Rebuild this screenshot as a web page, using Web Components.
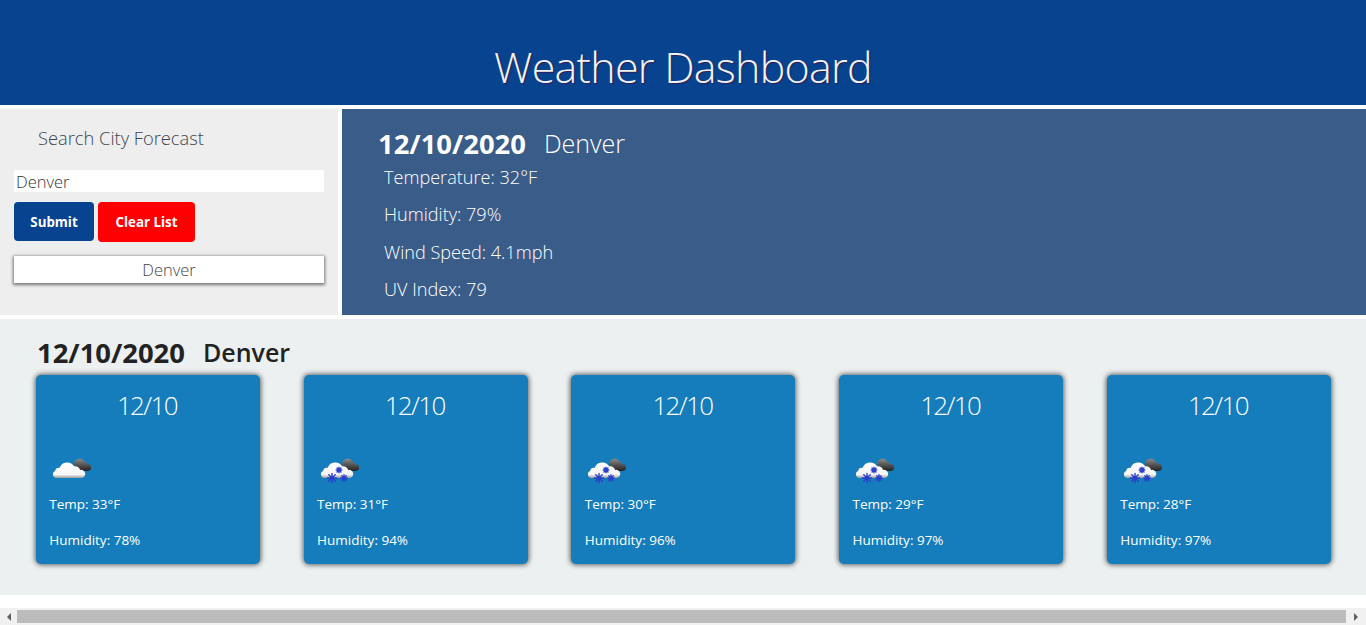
<!DOCTYPE html>
<html lang="en">
<head>
<meta charset="utf-8">
<title>Weather Dashboard</title>
<style>
    html, body { margin: 0; height: 625px; overflow: hidden; background: #fff; }
    body { font-family: "Open Sans", "Noto Sans", sans-serif; font-weight: 300; display: flex; flex-direction: column; }
</style>
</head>
<body>
<weather-header>Weather Dashboard</weather-header>
<div id="top-row" style="display:flex;gap:4px;margin-top:4px;height:206px">
    <search-panel></search-panel>
    <current-weather date="12/10/2020" city="Denver" temp="32" humidity="79" wind="4.1" uv="79"></current-weather>
</div>
<forecast-section date="12/10/2020" city="Denver"></forecast-section>
<fake-scrollbar></fake-scrollbar>

<script>
const forecast = [
    { date: '12/10', temp: 33, humidity: 78, icon: 'cloudy' },
    { date: '12/10', temp: 31, humidity: 94, icon: 'snow' },
    { date: '12/10', temp: 30, humidity: 96, icon: 'snow' },
    { date: '12/10', temp: 29, humidity: 97, icon: 'snow' },
    { date: '12/10', temp: 28, humidity: 97, icon: 'snow' },
];

class WeatherHeader extends HTMLElement {
    constructor() {
        super();
        this.attachShadow({ mode: 'open' });
        this.shadowRoot.innerHTML = `
            <style>
                :host { display: flex; height: 105px; background: #07438f; justify-content: center; align-items: flex-end; box-sizing: border-box; padding-bottom: 9px; }
                h1 { margin: 0; font-size: 43px; letter-spacing: -.75px; line-height: 59px; font-weight: 300; color: #f2f2f2; text-shadow: 1px 1px 1px rgba(60, 20, 70, .8); }
            </style>
            <h1><slot></slot></h1>
        `;
    }
}
customElements.define('weather-header', WeatherHeader);

class SearchPanel extends HTMLElement {
    constructor() {
        super();
        this.attachShadow({ mode: 'open' });
        this.shadowRoot.innerHTML = `
            <style>
                :host { display: block; width: 338px; flex: none; background: #eee; box-sizing: border-box; padding: 14px 14px 0; color: #444; }
                h2 { margin: 0 0 18px 24px; font-size: 18.3px; line-height: 29px; font-weight: 300; color: #3d4650; }
                .city { box-sizing: border-box; width: 310px; height: 22px; background: #fff; font-size: 16.5px; line-height: 24px; padding-left: 2px; color: #333; }
                .buttons { display: flex; gap: 4px; margin-top: 10px; }
                button { border: 0; border-radius: 4px; height: 39px; color: #fff; font: 700 13.3px "Open Sans", sans-serif; padding: 0; }
                .submit { width: 80px; background: #07438f; }
                .clear { width: 97px; height: 40px; background: #f00; }
                .saved { box-sizing: border-box; width: 310px; height: 27px; margin-top: 14px; background: #fff; text-align: center; font-size: 16.5px; line-height: 27px; color: #444; box-shadow: 0 1px 3px 1px rgba(0, 0, 0, .5); }
            </style>
            <h2>Search City Forecast</h2>
            <div class="city">Denver</div>
            <div class="buttons">
                <button class="submit">Submit</button>
                <button class="clear">Clear List</button>
            </div>
            <div class="saved">Denver</div>
        `;
    }
}
customElements.define('search-panel', SearchPanel);

class CurrentWeather extends HTMLElement {
    constructor() {
        super();
        this.attachShadow({ mode: 'open' });
    }

    connectedCallback() {
        const a = name => this.getAttribute(name);
        this.shadowRoot.innerHTML = `
            <style>
                :host { display: block; flex: 1; background: #3a5c89; color: #fff; box-sizing: border-box; padding: 17px 0 0 36px; }
                h2 { margin: 0 0 -2px; font-size: 25px; line-height: 35px; font-weight: 300; display: flex; gap: 18px; }
                b { font-weight: 700; font-size: 27.4px; }
                p { margin: 0 0 0 6px; font-size: 18.1px; line-height: 37.3px; }
            </style>
            <h2><b>${a('date')}</b><span>${a('city')}</span></h2>
            <p>Temperature: ${a('temp')}°F</p>
            <p>Humidity: ${a('humidity')}%</p>
            <p>Wind Speed: ${a('wind')}mph</p>
            <p>UV Index: ${a('uv')}</p>
        `;
    }
}
customElements.define('current-weather', CurrentWeather);

class WeatherIcon extends HTMLElement {
    constructor() {
        super();
        this.attachShadow({ mode: 'open' });
    }

    connectedCallback() {
        const snow = this.getAttribute('type') === 'snow';
        const flake = (x, y, r) => `
            <path stroke="#2a3ecb" stroke-width="1.4" stroke-linecap="round" d="M${x - r} ${y}H${x + r}M${x} ${y - r}V${y + r}M${x - r * .7} ${y - r * .7}L${x + r * .7} ${y + r * .7}M${x - r * .7} ${y + r * .7}L${x + r * .7} ${y - r * .7}"/>`;
        this.shadowRoot.innerHTML = `
            <style>
                :host { display: block; width: 50px; height: 50px; }
                svg { display: block; }
            </style>
            <svg width="50" height="50" viewBox="0 0 50 50">
                <defs>
                    <linearGradient id="dark" x1="0" y1="0" x2="0" y2="1">
                        <stop offset="0" stop-color="#8a8a8a"/><stop offset=".6" stop-color="#4a4a4a"/><stop offset="1" stop-color="#222"/>
                    </linearGradient>
                    <linearGradient id="light" x1="0" y1="0" x2="0" y2="1">
                        <stop offset="0" stop-color="#fff"/><stop offset=".78" stop-color="#f6f6f6"/><stop offset="1" stop-color="#9a9a9a"/>
                    </linearGradient>
                </defs>
                <path fill="url(#dark)" d="M23 20a5.5 5.5 0 0 1 10-3 5 5 0 0 1 3.5 3.2 3.4 3.4 0 0 1 .5 6.8H26z"/>
                <path fill="url(#light)" transform="translate(.5 .5)" d="M5 33.5a3.6 3.6 0 0 1-1.4-6.9 4 4 0 0 1 4.6-3.3 8 8 0 0 1 14.4-1.5 5 5 0 0 1 6 3.7 4 4 0 0 1 2 8z"/>
                ${snow ? flake(13, 34, 4.6) + flake(20, 26, 2.8) + flake(25, 34, 3.2) : ''}
            </svg>
        `;
    }
}
customElements.define('weather-icon', WeatherIcon);

class ForecastCard extends HTMLElement {
    constructor() {
        super();
        this.attachShadow({ mode: 'open' });
    }

    connectedCallback() {
        const a = name => this.getAttribute(name);
        this.shadowRoot.innerHTML = `
            <style>
                :host { display: block; width: 224px; height: 189px; box-sizing: border-box; padding: 11px 15px 0 13.5px; background: #157dbb; border-radius: 5px; color: #fff; box-shadow: 0 0 5px 1px rgba(0, 0, 0, .6); }
                h3 { margin: 0; font-size: 26px; letter-spacing: -1.6px; line-height: 38px; font-weight: 300; text-align: center; }
                weather-icon { margin: 20px 0 0 1.5px; }
                p { margin: 0; font-size: 13.5px; font-weight: 400; line-height: 18px; }
                .temp { margin-top: 1px; }
                .hum { margin-top: 18px; }
            </style>
            <h3>${a('date')}</h3>
            <weather-icon type="${a('icon')}"></weather-icon>
            <p class="temp">Temp: ${a('temp')}°F</p>
            <p class="hum">Humidity: ${a('humidity')}%</p>
        `;
    }
}
customElements.define('forecast-card', ForecastCard);

class ForecastSection extends HTMLElement {
    constructor() {
        super();
        this.attachShadow({ mode: 'open' });
    }

    connectedCallback() {
        this.shadowRoot.innerHTML = `
            <style>
                :host { display: block; height: 276px; margin-top: 4px; box-sizing: border-box; background: #ecf0f1; padding: 16px 35.25px 0 35.75px; color: #222; }
                h2 { margin: 0 0 5px 1.25px; font-size: 25px; line-height: 35px; font-weight: 600; display: flex; gap: 18px; }
                b { font-weight: 700; font-size: 27.4px; }
                .cards { display: flex; justify-content: space-between; }
            </style>
            <h2><b>${this.getAttribute('date')}</b><span>${this.getAttribute('city')}</span></h2>
            <div class="cards"></div>
        `;
        const cards = this.shadowRoot.querySelector('.cards');
        forecast.forEach(day => {
            const card = document.createElement('forecast-card');
            card.setAttribute('date', day.date);
            card.setAttribute('temp', day.temp);
            card.setAttribute('humidity', day.humidity);
            card.setAttribute('icon', day.icon);
            cards.appendChild(card);
        });
    }
}
customElements.define('forecast-section', ForecastSection);

class FakeScrollbar extends HTMLElement {
    constructor() {
        super();
        this.attachShadow({ mode: 'open' });
        this.shadowRoot.innerHTML = `
            <style>
                :host { display: flex; align-items: center; height: 17px; margin-top: auto; background: #f1f1f1; }
                .arrow { width: 17px; height: 17px; flex: none; display: flex; align-items: center; justify-content: center; }
                .thumb { flex: 1; height: 13px; background: #bcbcbc; }
                i { display: block; border: 4px solid transparent; }
                .left i { border-right-color: #606060; border-left-width: 0; }
                .right i { border-left-color: #606060; border-right-width: 0; }
                .right { width: 20px; }
            </style>
            <div class="arrow left"><i></i></div>
            <div class="thumb"></div>
            <div class="arrow right"><i></i></div>
        `;
    }
}
customElements.define('fake-scrollbar', FakeScrollbar);
</script>
</body>
</html>
